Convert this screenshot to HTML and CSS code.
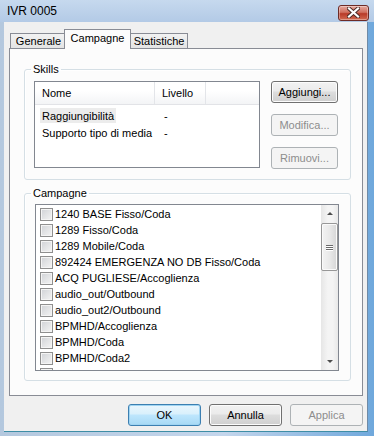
FILE: index.html
```html
<!DOCTYPE html>
<html>
<head>
    <link rel="stylesheet" href="styles.css">
</head>

<body>
    <div class="window">
        <div class="titlebar">
            <span class="title">IVR 0005</span>
            <div class="close">
                <svg width="13" height="11" viewBox="0 0 13 11">
                    <path d="M2 1.5 L11 9.5 M11 1.5 L2 9.5" stroke="#4a2a26" stroke-width="4" stroke-linecap="square"/>
                    <path d="M2 1.5 L11 9.5 M11 1.5 L2 9.5" stroke="#fff" stroke-width="2.2" stroke-linecap="square"/>
                </svg>
            </div>
        </div>

        <div class="client">
            <div class="tabs">
                <div class="tab tab-gen">Generale</div>
                <div class="tab tab-sel">Campagne</div>
                <div class="tab tab-stat">Statistiche</div>
            </div>

            <div class="panel">
                <fieldset class="group group-skills">
                    <legend>Skills</legend>
                    <div class="skills-row">
                        <div class="listview">
                            <div class="lv-head">
                                <div class="col col-name">Nome</div>
                                <div class="col col-level">Livello</div>
                                <div class="col col-rest"></div>
                            </div>
                            <div class="lv-row">
                                <div class="cell cell-name"><span class="sel">Raggiungibilità</span></div>
                                <div class="cell cell-level">-</div>
                            </div>
                            <div class="lv-row">
                                <div class="cell cell-name"><span>Supporto tipo di media</span></div>
                                <div class="cell cell-level">-</div>
                            </div>
                        </div>
                        <div class="side-buttons">
                            <button class="btn">Aggiungi...</button>
                            <button class="btn" disabled>Modifica...</button>
                            <button class="btn" disabled>Rimuovi...</button>
                        </div>
                    </div>
                </fieldset>

                <fieldset class="group group-camp">
                    <legend>Campagne</legend>
                    <div class="checklist">
                        <div class="items">
                            <div class="item"><span class="chk"></span>1240 BASE Fisso/Coda</div>
                            <div class="item"><span class="chk"></span>1289 Fisso/Coda</div>
                            <div class="item"><span class="chk"></span>1289 Mobile/Coda</div>
                            <div class="item"><span class="chk"></span>892424 EMERGENZA NO DB Fisso/Coda</div>
                            <div class="item"><span class="chk"></span>ACQ PUGLIESE/Accoglienza</div>
                            <div class="item"><span class="chk"></span>audio_out/Outbound</div>
                            <div class="item"><span class="chk"></span>audio_out2/Outbound</div>
                            <div class="item"><span class="chk"></span>BPMHD/Accoglienza</div>
                            <div class="item"><span class="chk"></span>BPMHD/Coda</div>
                            <div class="item"><span class="chk"></span>BPMHD/Coda2</div>
                            <!-- next row only peeks in under the edge -->
                            <div class="item"><span class="chk"></span></div>
                        </div>
                        <div class="scrollbar">
                            <div class="arrow arrow-up"></div>
                            <div class="track">
                                <div class="thumb-top"></div>
                                <div class="thumb">
                                    <span></span><span></span><span></span>
                                </div>
                            </div>
                            <div class="arrow arrow-down"></div>
                        </div>
                    </div>
                </fieldset>
            </div>

            <div class="bottom-buttons">
                <button class="btn btn-wide btn-default">OK</button>
                <button class="btn btn-wide">Annulla</button>
                <button class="btn btn-wide" disabled>Applica</button>
            </div>
        </div>
    </div>
</body>

</html>
```

FILE: styles.css
```css
*{
    box-sizing: border-box;
}
body{
    margin: 0;
    font-family: "Liberation Sans", Arial, sans-serif;
    font-size: 11px;
    color: #000;
}
.window{
    width: 374px;
    height: 436px;
    display: flex;
    flex-direction: column;
    background: linear-gradient(90deg, #b4c8de, #c4d6ec 60%, #6fa8dc);
}
.titlebar{
    height: 22px;
    display: flex;
    align-items: center;
    justify-content: space-between;
    padding: 0 5px 0 7px;
    background: linear-gradient(#c6d9ee, #b3cae6);
}
.title{
    font-size: 12px;
    color: #000;
}
.close{
    width: 31px;
    height: 16px;
    margin-top: 3px;
    border: 1px solid #6d2b26;
    border-radius: 3px;
    background: linear-gradient(#e6a89e, #d0705f 45%, #b83a28 55%, #d26b52);
    display: flex;
    align-items: center;
    justify-content: center;
    box-shadow: inset 0 0 0 1px rgba(255,255,255,0.35);
}

.client{
    flex: 1;
    margin: 0 6px 4px 4px;
    background-color: #f0f0f0;
    border-right: 1px solid #6f8aa6;
    border-bottom: 1px solid #3e8ea6;
    padding: 8px 4px 0 5px;
    display: flex;
    flex-direction: column;
}

/* tabs */
.tabs{
    display: flex;
    align-items: flex-end;
    height: 19px;
    padding-left: 1px;
    margin-bottom: -1px;
}
.tab{
    height: 16px;
    border: 1px solid #898c95;
    border-bottom: none;
    background: linear-gradient(#f2f2f2, #e3e3e3);
    display: flex;
    align-items: center;
    justify-content: center;
    padding-bottom: 1px;
}
.tab-gen{
    width: 56px;
    border-right: none;
}
.tab-sel{
    position: relative;
    width: 67px;
    height: 20px;
    margin: 0 -2px;
    background: #fcfcfc;
    padding-bottom: 4px;
}
.tab-stat{
    width: 59px;
    border-left: none;
    padding-left: 2px;
}

.panel{
    border: 1px solid #898c95;
    background-color: #fcfcfc;
    height: 348px;
    padding-top: 14px;
}

/* group boxes */
.group{
    margin: 0 11px 0 14px;
    padding: 0 0 10px 9px;
    border: 1px solid #d5dfe5;
    border-radius: 3px;
    box-shadow: inset 1px 1px 0 #fff;
}
.group legend{
    margin-left: -3px;
    padding: 0 2px;
    line-height: 13px;
}
.group-camp{
    margin-top: 7px;
    padding: 0 0 9px 9px;
}

.skills-row{
    display: flex;
    padding-top: 5px;
}
.listview{
    width: 226px;
    height: 87px;
    border: 1px solid #828790;
    background: #fff;
}
.lv-head{
    display: flex;
    height: 23px;
    background: linear-gradient(#fff 40%, #f3f4f6);
    border-bottom: 1px solid #e2e3e7;
}
.col{
    height: 100%;
    display: flex;
    align-items: center;
    padding-left: 7px;
    border-right: 1px solid #e3e5e9;
}
.col-name{
    width: 120px;
}
.col-level{
    width: 51px;
}
.col-rest{
    flex: 1;
    border-right: none;
}
.lv-row{
    display: flex;
    height: 17px;
    align-items: center;
}
.lv-head + .lv-row{
    margin-top: 2px;
}
.cell-name{
    width: 120px;
    padding-left: 5px;
}
.cell-name span{
    padding: 2px 2px 1px 2px;
}
.cell-name .sel{
    background-color: #ececec;
}
.cell-level{
    padding-left: 9px;
}

.side-buttons{
    display: flex;
    flex-direction: column;
    gap: 11px;
    margin-left: 11px;
}

/* buttons */
.btn{
    font-family: "Liberation Sans", Arial, sans-serif;
    font-size: 11px;
    font-weight: normal;
    color: #000;
    width: 67px;
    height: 22px;
    padding: 0;
    border: 1px solid #707070;
    border-radius: 3px;
    background: linear-gradient(#f2f2f2 0%, #ebebeb 45%, #dddddd 50%, #cfcfcf 100%);
    box-shadow: inset 0 0 0 1px #fcfcfc;
}
.btn:disabled{
    color: #8d8d8d;
    border-color: #adb2b5;
    background: #f4f4f4;
    box-shadow: none;
}
.btn-wide{
    width: 73px;
}
.btn-default{
    border-color: #3c7fb1;
    background: linear-gradient(#eaf6fd 0%, #d9f0fc 45%, #bee6fd 50%, #a7d9f5 100%);
    box-shadow: inset 0 0 0 1px #9fd4f2;
}

/* checked list */
.checklist{
    display: flex;
    width: 304px;
    height: 167px;
    border: 1px solid #828790;
    background: #fff;
    margin-top: 4px;
    margin-left: 1px;
}
.items{
    flex: 1;
    overflow: hidden;
    padding-top: 1px;
}
.item{
    height: 16px;
    display: flex;
    align-items: center;
    padding-left: 4px;
    white-space: nowrap;
}
.chk{
    width: 13px;
    height: 13px;
    margin-right: 2px;
    border: 1px solid #8f8f8f;
    background: linear-gradient(135deg, #d0d2d6, #f4f4f4);
    box-shadow: inset 0 0 0 1px #f4f4f4;
    flex-shrink: 0;
}

.scrollbar{
    width: 17px;
    display: flex;
    flex-direction: column;
    background: linear-gradient(90deg, #e6e6e6, #f4f4f4 40%, #f4f4f4 70%, #e8e8e8);
}
.arrow{
    height: 17px;
    display: flex;
    align-items: center;
    justify-content: center;
}
.arrow-up::before{
    content: "";
    border-left: 3px solid transparent;
    border-right: 3px solid transparent;
    border-bottom: 3px solid #4d4d4d;
}
.arrow-down::before{
    content: "";
    border-left: 3px solid transparent;
    border-right: 3px solid transparent;
    border-top: 3px solid #4d4d4d;
}
.track{
    flex: 1;
}
.thumb-top{
    height: 1px;
}
.thumb{
    height: 48px;
    border: 1px solid #979797;
    border-radius: 2px;
    background: linear-gradient(90deg, #f3f3f3, #e9e9e9 50%, #d6d6d6);
    box-shadow: inset 0 0 0 1px #fafafa;
    display: flex;
    flex-direction: column;
    align-items: center;
    justify-content: center;
    gap: 1px;
}
.thumb span{
    width: 7px;
    height: 1px;
    background: #6a6a6a;
    box-shadow: 0 1px 0 #fff;
}

.bottom-buttons{
    display: flex;
    justify-content: flex-end;
    gap: 8px;
    margin-top: 8px;
}
```
